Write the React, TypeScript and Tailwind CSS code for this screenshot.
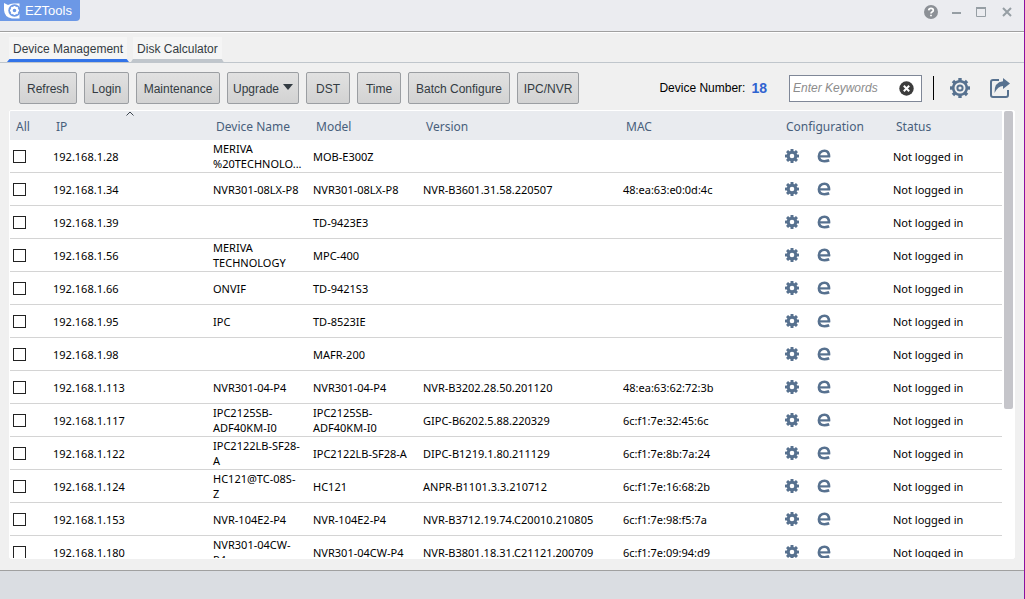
import { useState } from 'react';
import clsx from 'clsx';

interface Device {
  ip: string;
  name?: string;
  model: string;
  version?: string;
  mac?: string;
}

const devices: Device[] = [
  { ip: '192.168.1.28', name: 'MERIVA\n%20TECHNOLO...', model: 'MOB-E300Z' },
  {
    ip: '192.168.1.34',
    name: 'NVR301-08LX-P8',
    model: 'NVR301-08LX-P8',
    version: 'NVR-B3601.31.58.220507',
    mac: '48:ea:63:e0:0d:4c',
  },
  { ip: '192.168.1.39', model: 'TD-9423E3' },
  { ip: '192.168.1.56', name: 'MERIVA\nTECHNOLOGY', model: 'MPC-400' },
  { ip: '192.168.1.66', name: 'ONVIF', model: 'TD-9421S3' },
  { ip: '192.168.1.95', name: 'IPC', model: 'TD-8523IE' },
  { ip: '192.168.1.98', model: 'MAFR-200' },
  {
    ip: '192.168.1.113',
    name: 'NVR301-04-P4',
    model: 'NVR301-04-P4',
    version: 'NVR-B3202.28.50.201120',
    mac: '48:ea:63:62:72:3b',
  },
  {
    ip: '192.168.1.117',
    name: 'IPC2125SB-\nADF40KM-I0',
    model: 'IPC2125SB-\nADF40KM-I0',
    version: 'GIPC-B6202.5.88.220329',
    mac: '6c:f1:7e:32:45:6c',
  },
  {
    ip: '192.168.1.122',
    name: 'IPC2122LB-SF28-\nA',
    model: 'IPC2122LB-SF28-A',
    version: 'DIPC-B1219.1.80.211129',
    mac: '6c:f1:7e:8b:7a:24',
  },
  {
    ip: '192.168.1.124',
    name: 'HC121@TC-08S-\nZ',
    model: 'HC121',
    version: 'ANPR-B1101.3.3.210712',
    mac: '6c:f1:7e:16:68:2b',
  },
  {
    ip: '192.168.1.153',
    name: 'NVR-104E2-P4',
    model: 'NVR-104E2-P4',
    version: 'NVR-B3712.19.74.C20010.210805',
    mac: '6c:f1:7e:98:f5:7a',
  },
  {
    ip: '192.168.1.180',
    name: 'NVR301-04CW-\nP4',
    model: 'NVR301-04CW-P4',
    version: 'NVR-B3801.18.31.C21121.200709',
    mac: '6c:f1:7e:09:94:d9',
  },
];

const columns = [
  { label: 'All', width: 'w-[40px]' },
  { label: 'IP', width: 'w-[160px]' },
  { label: 'Device Name', width: 'w-[100px]' },
  { label: 'Model', width: 'w-[110px]' },
  { label: 'Version', width: 'w-[200px]' },
  { label: 'MAC', width: 'w-[160px]' },
  { label: 'Configuration', width: 'w-[110px]' },
  { label: 'Status', width: '' },
];

const actions = [
  { label: 'Refresh', width: 'w-[58px]' },
  { label: 'Login', width: 'w-[45px]' },
  { label: 'Maintenance', width: 'w-[84px]' },
  { label: 'Upgrade', width: 'w-[72px]', menu: true },
  { label: 'DST', width: 'w-[44px]' },
  { label: 'Time', width: 'w-[44px]' },
  { label: 'Batch Configure', width: 'w-[102px]' },
  { label: 'IPC/NVR', width: 'w-[62px]' },
];

const teeth = [0, 45, 90, 135, 180, 225, 270, 315];

const cell = 'border-b border-[#d4d4d4] p-0 pl-[3px]';

function Logo() {
  return (
    <svg width="18" height="18" viewBox="0 0 18 18" aria-hidden="true">
      <path d="M1 1 L5 3 Q8 1 12 1.5 H16.5 V16.5 H9 Q1.5 15.5 1 8 Z" fill="#fff" />
      <circle cx="11.5" cy="8.5" r="6.2" fill="#6c98e6" />
      {teeth.map((angle) => (
        <path key={angle} d="M11.500 4 V6" stroke="#fff" strokeWidth="2" transform={`rotate(${angle} 11.5 8.5)`} />
      ))}
      <circle cx="11.5" cy="8.5" r="2.8" fill="none" stroke="#fff" strokeWidth="2" />
    </svg>
  );
}

function SmallGear() {
  return (
    <svg width="14" height="14" viewBox="0 0 14 14" fill="#57718f" aria-hidden="true">
      {teeth.map((angle) => (
        <rect key={angle} x="5.5" y="0" width="3" height="4" rx="0.5" transform={`rotate(${angle} 7 7)`} />
      ))}
      <circle cx="7" cy="7" r="3.8" fill="none" stroke="#57718f" strokeWidth="3" />
    </svg>
  );
}

function BrowserIcon() {
  return (
    <svg width="14" height="14" viewBox="0 0 14 14" fill="none" stroke="#57718f" aria-hidden="true">
      <path d="M3 7.4 H13.2" strokeWidth="2.2" />
      <path
        d="M11.900 7.800 C12.200 3.600 10.200 1.700 7.600 1.700 C4.200 1.700 1.900 4 1.900 7.300 C1.900 10.600 4 12.200 7.400 12.200 C9.400 12.200 10.900 11.900 12.200 11.300"
        strokeWidth="2.600"
      />
    </svg>
  );
}

function SettingsIcon() {
  return (
    <svg width="20" height="20" viewBox="0 0 20 20" fill="none" stroke="#57718f" aria-hidden="true">
      {teeth.map((angle) => (
        <path key={angle} d="M10 0 V3.500" strokeWidth="3.400" transform={`rotate(${angle} 10 10)`} />
      ))}
      <circle cx="10" cy="10" r="6.8" strokeWidth="2.6" />
      <circle cx="10" cy="10" r="2.6" strokeWidth="2" />
    </svg>
  );
}

function ExportIcon() {
  return (
    <svg width="20" height="20" viewBox="0 0 20 20" fill="none" aria-hidden="true">
      <path d="M9 2 H3 Q1 2 1 4 V17 Q1 19 3 19 H16 Q18 19 18 17 V12" stroke="#57718f" strokeWidth="2" />
      <path d="M13 0 L20 5.500 L13 11 V8 Q8 8 4.500 15 Q4 4 13 3.200 Z" fill="#57718f" />
    </svg>
  );
}

function TitleBar() {
  return (
    <header className="flex h-8 flex-shrink-0 items-start justify-between border-b border-[#a0a0a0] bg-[#ebecf0]">
      <h1 className="flex h-[21px] items-center gap-1 rounded-br-sm bg-[#6c98e6] pl-[3px] pr-2 text-[13px] text-white">
        <Logo />
        EZTools
      </h1>
      <div className="flex items-center gap-2 pr-[9px] pt-1">
        <button aria-label="Help" className="flex size-4 items-center justify-center">
          <svg width="14" height="14" viewBox="0 0 14 14" fill="none">
            <circle cx="7" cy="7" r="7" fill="#8c9096" />
            <path
              d="M4.700 5.300 Q4.900 3.300 7 3.300 Q9.300 3.300 9.300 5.200 Q9.300 6.300 8 7 Q7 7.600 7 8.600 M7 9.800 V11.300"
              stroke="#fff"
              strokeWidth="1.700"
            />
          </svg>
        </button>
        <button aria-label="Minimize" className="ml-[2px] flex size-4 items-center justify-center">
          <svg width="10" height="10" viewBox="0 0 10 10" stroke="#969ea4" strokeWidth="2">
            <path d="M0 6 H9" />
          </svg>
        </button>
        <button aria-label="Maximize" className="flex size-4 items-center justify-center">
          <svg width="10" height="10" viewBox="0 0 10 10" fill="none" stroke="#969ea4">
            <path d="M0.500 1 V9.500 H9.500 V1" />
            <path d="M0 1 H10" strokeWidth="2" />
          </svg>
        </button>
        <button aria-label="Close" className="ml-[2px] flex size-4 items-center justify-center">
          <svg width="10" height="10" viewBox="0 0 10 10" stroke="#969ea4" strokeWidth="2">
            <path d="M1 1 L9 9 M9 1 L1 9" />
          </svg>
        </button>
      </div>
    </header>
  );
}

function Tabs() {
  const [active, setActive] = useState('Device Management');

  return (
    <nav className="flex h-[31px] flex-shrink-0 items-end gap-[2px] border-b border-t border-b-[#c0c6cc] border-t-white pl-[7px]">
      {['Device Management', 'Disk Calculator'].map((tab) => (
        <button key={tab} onClick={() => setActive(tab)}>
          <span className="mx-[2px] block bg-[#f5f5f5] px-[4px] pb-[2px] pt-1 leading-4">{tab}</span>
          <svg height="3" viewBox="0 0 100 3" preserveAspectRatio="none" className="block w-0 min-w-full">
            <path d="M0 3 L2 0 H98 L100 3 Z" className={clsx(tab === active ? 'fill-[#3273e8]' : 'fill-[#c0c6cc]')} />
          </svg>
        </button>
      ))}
    </nav>
  );
}

function Toolbar() {
  const [keyword, setKeyword] = useState('');

  return (
    <div className="flex h-[47px] flex-shrink-0 items-center justify-between pl-[19px] pr-[14px] pt-[3px]">
      <div className="flex gap-[7px]">
        {actions.map(({ label, width, menu }) => (
          <button
            key={label}
            className={clsx(
              'flex h-8 items-center justify-center gap-1 rounded-xs border border-[#9b9ea2] bg-linear-to-b from-[#e1e1e1] to-[#d2d2d2] pt-[2px] whitespace-nowrap',
              width,
            )}
          >
            {label}
            {menu && (
              <svg width="10" height="6" viewBox="0 0 10 6" fill="#333b42" className="mb-1" aria-hidden="true">
                <path d="M0 0 H10 L5 6 Z" />
              </svg>
            )}
          </button>
        ))}
      </div>
      <div className="flex items-center">
        <p className="mr-[22px] flex items-center gap-[6px] text-black">
          Device Number:
          <span className="text-[14px] font-bold leading-4 text-[#2f63d0]">18</span>
        </p>
        <div className="flex h-[27px] w-[133px] items-center border border-[#7f8797] bg-white pl-[3px] pr-[7px]">
          <input
            type="text"
            aria-label="Enter Keywords"
            placeholder="Enter Keywords"
            value={keyword}
            onChange={(e) => setKeyword(e.target.value)}
            className="min-w-0 flex-1 italic outline-none placeholder:text-[#8c8c8c]"
          />
          <button aria-label="Clear keywords" onClick={() => setKeyword('')}>
            <svg width="15" height="15" viewBox="0 0 15 15">
              <circle cx="7.500" cy="7.500" r="7.200" fill="#3c3c3c" />
              <path d="M4.800 4.800 L10.200 10.200 M10.200 4.800 L4.800 10.200" stroke="#fff" strokeWidth="2" />
            </svg>
          </button>
        </div>
        <span className="ml-[11px] h-6 w-px bg-black" />
        <button aria-label="Settings" className="ml-4">
          <SettingsIcon />
        </button>
        <button aria-label="Export" className="ml-5">
          <ExportIcon />
        </button>
      </div>
    </div>
  );
}

function DeviceTable() {
  return (
    <main className="mx-[9px] flex min-h-0 flex-1 overflow-hidden rounded-xs border border-white bg-white font-['Noto_Sans',sans-serif]">
      <div className="min-w-0 flex-1 overflow-hidden">
        <table className="w-full table-fixed border-separate border-spacing-0 text-left">
          <thead>
            <tr className="h-[29px] bg-[#e9ebef] text-[12px] leading-4 text-[#485f7c]">
              {columns.map(({ label, width }) => (
                <th key={label} className={clsx('relative p-0 pl-[6px] pt-[2px] font-normal', width)}>
                  {label}
                  {label === 'IP' && (
                    <svg
                      width="8"
                      height="5"
                      viewBox="0 0 8 5"
                      fill="none"
                      stroke="#3f4650"
                      className="absolute left-[76px] top-0"
                    >
                      <path d="M0.500 4.500 L4 1 L7.500 4.500" />
                    </svg>
                  )}
                </th>
              ))}
            </tr>
          </thead>
          <tbody className="text-[11px] leading-[15px] text-black">
            {devices.map((device) => (
              <tr key={device.ip} className="h-[33px]">
                <td className={cell}>
                  <input
                    type="checkbox"
                    aria-label={`Select ${device.ip}`}
                    className="block size-[13px] appearance-none border border-[#222] bg-white checked:bg-[#57718f]"
                  />
                </td>
                <td className={cell}>{device.ip}</td>
                <td className={clsx(cell, 'whitespace-pre')}>{device.name}</td>
                <td className={clsx(cell, 'whitespace-pre')}>{device.model}</td>
                <td className={cell}>{device.version}</td>
                <td className={cell}>{device.mac}</td>
                <td className={cell}>
                  <div className="ml-[2px] flex items-center gap-[18px]">
                    <button aria-label={`Configure ${device.ip}`}>
                      <SmallGear />
                    </button>
                    <button aria-label={`Open ${device.ip} in browser`}>
                      <BrowserIcon />
                    </button>
                  </div>
                </td>
                <td className={cell}>Not logged in</td>
              </tr>
            ))}
          </tbody>
        </table>
      </div>
      <div className="w-3 flex-shrink-0 pl-[2px]">
        <div className="h-2/3 w-[9px] rounded-xs bg-[#c5c5ca]" />
      </div>
    </main>
  );
}

function App() {
  return (
    <div className="flex h-screen flex-col overflow-hidden border-r border-[#8e109e] bg-[#f0f0f0] font-['Liberation_Sans',sans-serif] text-[12px] text-[#333b42]">
      <TitleBar />
      <Tabs />
      <Toolbar />
      <DeviceTable />
      <footer className="mt-[11px] h-[29px] flex-shrink-0 border-t border-[#a0a0a0] bg-[#dadde2]" />
    </div>
  );
}

export default App;
